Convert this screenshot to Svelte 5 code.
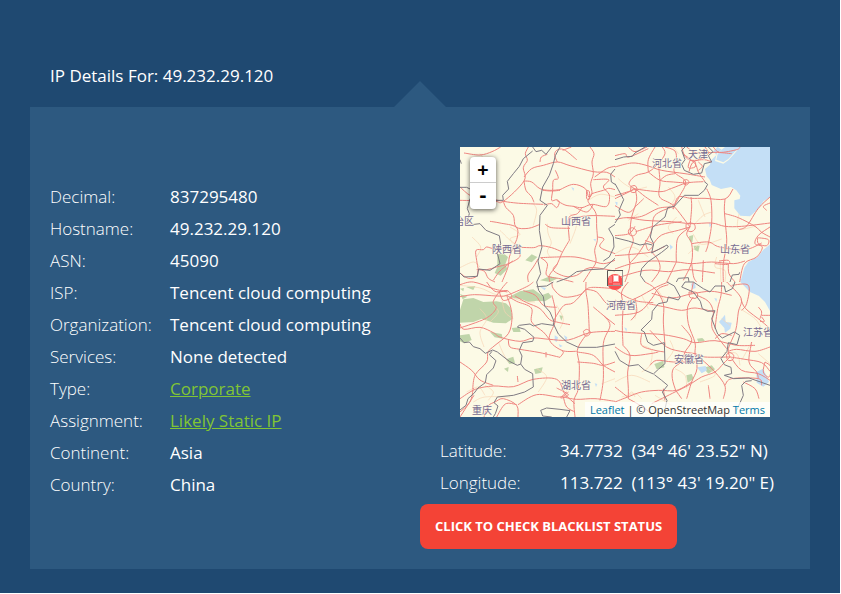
<script>
  const details = [
    { label: 'Decimal:', value: '837295480' },
    { label: 'Hostname:', value: '49.232.29.120' },
    { label: 'ASN:', value: '45090' },
    { label: 'ISP:', value: 'Tencent cloud computing' },
    { label: 'Organization:', value: 'Tencent cloud computing' },
    { label: 'Services:', value: 'None detected' },
    { label: 'Type:', value: 'Corporate', href: '#corporate' },
    { label: 'Assignment:', value: 'Likely Static IP', href: '#static' },
    { label: 'Continent:', value: 'Asia' },
    { label: 'Country:', value: 'China' }
  ];

  const position = [
    { label: 'Latitude:', value: '34.7732\u00a0 (34° 46\' 23.52" N)' },
    { label: 'Longitude:', value: '113.722\u00a0 (113° 43\' 19.20" E)' }
  ];

  const places = [
    { name: '治区', x: -6, y: 78 },
    { name: '山西省', x: 101, y: 78 },
    { name: '陕西省', x: 32, y: 106 },
    { name: '河北省', x: 192, y: 20 },
    { name: '天津', x: 228, y: 11 },
    { name: '山东省', x: 260, y: 106 },
    { name: '河南省', x: 146, y: 162 },
    { name: '湖北省', x: 101, y: 242 },
    { name: '重庆', x: 12, y: 267 },
    { name: '安徽省', x: 214, y: 216 },
    { name: '江苏省', x: 283, y: 189 }
  ];

  // Turns a list of points into a soft curve that runs through all of them.
  function curve(line) {
    const n = line.slice(1).split(' ').map(Number);
    const p = [];
    for (let i = 0; i < n.length; i += 2) p.push([n[i], n[i + 1]]);
    let d = `M${p[0]}`;
    for (let i = 0; i < p.length - 1; i++) {
      const a = p[i - 1] ?? p[i];
      const b = p[i];
      const c = p[i + 1];
      const e = p[i + 2] ?? c;
      d += `C${b[0] + (c[0] - a[0]) / 6} ${b[1] + (c[1] - a[1]) / 6} ${c[0] - (e[0] - b[0]) / 6} ${c[1] - (e[1] - b[1]) / 6} ${c[0]} ${c[1]}`;
    }
    return d;
  }

  // The map is drawn as four tiles, each 465 units wide and 405 high.
  const tiles = [
    {
      shift: 'translate(0 0)',
      minor: [
        'M262 230 264 258 274 288 262 312 270 330', 'M150 240 180 262 150 276 180 300', 'M36 270 62 300 50 330', 'M218 168 230 190 220 235',
        'M0 362 40 345 60 360', 'M385 160 420 142 465 150', 'M330 200 350 230 330 290', 'M60 20 75 40', 'M120 250 160 290'
      ],
      roads: [
        'M12 18 60 24 96 14 122 0', 'M205 0 196 20 202 40 190 62 192 102 130 163 100 162 0 160', 'M0 120 30 145 60 150 130 163 168 168 200 170 250 172',
        'M130 163 138 182 160 205 168 240 205 244 240 232', 'M90 223 120 228 168 240 172 270 160 300 148 330 144 360 126 405', 'M192 102 215 105 240 125 270 130 300 128',
        'M192 102 198 130 214 148 222 166', 'M192 90 215 65 250 55 292 45 330 56 400 74 440 76 465 90', 'M240 45 244 30 262 22', 'M292 45 284 25 290 10 312 8 350 38',
        'M308 10 334 0', 'M390 0 402 20 396 45 400 80 392 110 396 140 384 160 392 175 408 200 410 240 412 280 404 310 408 345 390 374 370 405',
        'M300 128 340 112 376 125 386 150 396 140 430 130 446 124 465 128', 'M248 130 275 132 300 130', 'M286 70 295 94 280 100 278 130 275 160 290 158 298 166 290 182 275 170 252 174',
        'M290 160 315 174 340 178 366 182 396 172 440 178 448 144 430 120 446 98 400 98', 'M366 182 352 200 326 214 328 280', 'M330 214 390 206 465 208', 'M256 232 275 242 330 244',
        'M328 280 305 320 290 355 268 385 270 405', 'M166 300 220 302 240 296 275 302 305 314', 'M242 332 290 330 345 330 390 340 430 350 465 340', 'M242 332 262 350 260 385 300 395 340 405',
        'M292 350 280 370 315 388 350 385 390 362 465 372', 'M55 368 50 340 48 310 70 308 80 300 105 305 160 300', 'M50 368 80 368 110 360 145 350 180 328 166 300',
        'M0 378 25 394 50 388 56 368 74 374 85 394 105 405', 'M205 405 204 384 220 360 235 335', 'M465 58 440 65 404 90', 'M100 400 120 372 158 342', 'M412 270 432 276 420 300 465 320', 'M340 178 380 195 400 172',
        'M380 130 388 134 388 156 380 154 380 130'
      ],
      borders: [
        'M300 0 286 26 280 50 268 85 248 120 240 160 262 175 240 205 238 250 246 300 234 342 242 380 230 405', 'M218 0 228 14 245 10 258 22 275 0',
        'M218 12 190 35 178 58 160 80 142 103 146 126 128 145 130 160 108 160', 'M30 155 22 185 28 200 18 235 60 230 78 250 118 266 122 290 112 318 120 350 90 370 56 366 52 388 12 390 0 378',
        'M0 38 4 50', 'M0 121 20 121 30 126', 'M465 66 452 82 454 105 465 112', 'M465 232 446 245 460 270 462 300 448 330 430 342', 'M465 334 430 366 390 368 350 374 325 392 290 405'
      ],
      woods: ['M112 322 132 320 144 330 136 352 142 366 122 386 104 378 112 360Z', 'M196 340 215 322 232 330 215 346Z', 'M240 400 270 388 294 394 270 405Z'],
      water: ['M334 120 342 124 340 132Z', 'M400 276 408 276 406 284Z']
    },
    {
      shift: 'translate(155 0)',
      minor: [
        'M10 95 30 112 60 126 96 120', 'M290 195 265 205 240 230', 'M372 200 370 245 420 238', 'M234 260 260 292 320 276', 'M0 320 50 300 100 330', 'M160 120 180 150 162 180',
        'M185 210 160 240 175 260', 'M250 160 270 210', 'M260 285 220 320', 'M305 330 300 360 330 370 330 405', 'M315 340 318 405', 'M40 220 70 200', 'M175 0 190 20'
      ],
      roads: [
        'M0 26 30 20 42 30 100 5', 'M40 0 60 14 96 0', 'M0 60 50 48 90 54 140 70 210 80 270 90', 'M60 126 42 110 62 86 100 75 130 50 150 20 142 0', 'M120 0 100 38 100 75',
        'M130 50 135 105 134 150 175 176 225 240', 'M60 126 65 160 50 210 46 254 55 280 42 320 44 360 30 405', 'M60 126 135 134 170 124 215 108 265 104', 'M100 75 135 100 175 105 215 108',
        'M0 146 46 132 60 126 92 150 130 175', 'M0 176 40 196 65 175 86 155', 'M36 212 80 208 130 184 170 180', 'M0 218 36 212 90 220 170 224 228 230 290 228 330 238 380 238 465 228',
        'M150 0 180 12 184 42 178 75 212 105 192 150 178 176', 'M200 0 210 28 230 40 268 38 290 45', 'M204 20 240 50 250 75 270 104', 'M270 0 280 20 255 36 232 48 222 74', 'M215 0 245 18 300 16 350 20',
        'M295 0 314 16 365 8 375 0', 'M225 40 240 45 240 60 220 62 225 40', 'M250 45 262 58 250 70', 'M175 170 175 186 190 150 228 154 270 154 330 156 354 126', 'M228 150 230 180 225 240',
        'M330 156 328 190 332 238 335 290 325 350 325 405', 'M330 200 370 212 420 238 440 256 465 270', 'M275 125 288 160 290 228 280 290 272 315', 'M225 240 190 250 140 264 115 290',
        'M225 240 215 262 230 290 230 345 205 400', 'M225 240 190 270 184 310 184 345', 'M213 232 225 228 238 232 240 246 228 254 215 248 213 232', 'M230 290 280 285 314 300 390 308 440 288',
        'M135 100 155 85 180 80', 'M170 180 120 205 110 250 95 280 70 320 45 348', 'M60 126 0 155', 'M0 266 42 260 60 238', 'M52 242 62 248 64 258 56 266 44 264 40 254 44 245 52 242', 'M62 254 130 234 200 224',
        'M0 326 50 322 110 315 150 298', 'M0 366 50 350 110 342 184 345 230 350 290 345 355 350 390 342', 'M230 350 236 390 245 405', 'M340 352 342 380 360 405', 'M465 150 430 184 396 236 372 248',
        'M465 168 445 178 455 190', 'M465 240 430 265 420 290 442 300 425 330 388 350 374 405', 'M428 272 460 278 455 296 430 290 428 272', 'M90 280 115 292 100 310 92 290', 'M110 405 134 370 130 340 110 315',
        'M155 405 184 345', 'M0 395 90 370 160 374 220 368 300 378', 'M265 340 262 405', 'M300 350 340 352 340 340 312 342', 'M48 118 60 116 66 126 60 136 48 134 48 118', 'M206 100 216 98 222 106 214 114 206 110 206 100'
      ],
      borders: [
        'M0 38 26 30 52 28 60 18 90 0', 'M0 110 10 128 26 158 12 190 16 204 0 228', 'M280 0 294 14 280 26 290 45 268 50 260 78 235 82 208 70 200 52 210 38 200 10 210 0',
        'M268 104 278 112 268 130 250 145 208 145 178 178 158 182 150 210 130 226 112 242 106 270 116 290 110 318 156 294 160 300 140 316 98 345 80 365 76 385 90 405',
        'M0 272 40 282 75 294 96 290 112 294', 'M345 405 352 384 372 382 374 376', 'M184 405 190 394 220 392 222 405'
      ],
      woods: ['M222 268 235 264 232 286 224 282Z', 'M236 296 254 296 250 314 238 308Z'],
      water: [
        'M308 0 295 12 304 24 290 38 284 54 270 66 275 88 284 98 290 114 318 126 348 120 364 130 376 146 374 156 358 160 358 184 376 206 405 208 430 186 446 162 468 150 468 0 375 0 358 20 340 40 325 50 300 42 305 20 320 8Z',
        'M320 8 308 22 304 38 325 46 340 36 358 16 375 0 330 0Z',
        'M468 290 445 308 428 330 400 345 388 362 376 405 468 405Z', 'M0 164 8 166 6 178Z', 'M164 292 174 300 166 308Z', 'M282 225 290 235 284 240Z'
      ]
    },
    {
      shift: 'translate(0 135)',
      minor: [
        'M0 10 60 18 100 35 140 45', 'M150 45 190 58 225 60', 'M60 80 80 110 60 150 72 195', 'M115 180 130 215 145 240', 'M100 70 115 90 90 120', 'M230 260 260 285 235 330', 'M75 310 100 330 85 355',
        'M20 330 55 315 75 340', 'M290 70 310 110 300 140', 'M125 45 135 90 160 110', 'M425 305 465 290', 'M40 360 75 345 150 345'
      ],
      roads: [
        'M0 44 44 38 110 42 140 40 200 14 220 0', 'M142 0 125 20 100 58 108 80 76 110 0 138', 'M0 126 12 142 60 136 100 152 122 166 180 178 220 168 268 172 325 174 390 152 465 148',
        'M140 40 152 75 156 110 145 155 105 190 84 210 80 240 46 278 38 320', 'M118 30 142 26 155 45 130 55 118 30', 'M140 40 170 58 214 78 215 120 250 150 268 172', 'M165 42 200 62 240 80 268 112 290 120 330 128',
        'M190 26 226 40 250 70 290 76', 'M276 40 285 80 285 120 268 172 305 205 350 208', 'M276 0 280 20 310 45 360 38 378 22 400 16 465 20', 'M378 0 378 30 384 70 388 150', 'M378 22 340 62 312 70 290 100 280 120',
        'M388 150 370 170 352 205 358 250 355 320 342 355 345 405', 'M378 22 410 30 440 65 465 70', 'M370 148 380 142 390 148 388 158 376 162 370 148', 'M145 172 150 195 180 202 240 212 300 226',
        'M300 226 310 212 305 205', 'M352 210 400 220 430 250 465 270', 'M352 240 400 244 430 250 465 240', 'M430 100 450 130 430 185 430 290 420 355', 'M0 240 35 265 60 294 100 310',
        'M0 350 46 322 100 312 160 314 220 292 290 292 314 335 345 365', 'M40 318 30 360 0 390', 'M172 282 174 300', 'M258 210 258 226', 'M72 405 84 372 105 360 130 350 170 370 174 405', 'M174 368 230 338 300 345 325 330',
        'M290 318 325 338 302 348 320 330', 'M310 345 350 352 405 350 465 358', 'M310 345 320 375 345 390', 'M0 405 42 340', 'M110 405 136 366 170 368', 'M465 128 430 100 400 75', 'M0 8 40 0 100 20 142 30', 'M80 0 105 28 142 26'
      ],
      borders: [
        'M230 0 236 25 250 44 254 72 270 90 282 118 280 130 245 125 220 132 210 126 178 130 172 135 194 142 222 166 218 178 188 182 178 205 186 222 182 246 172 250 148 238 112 210 98 204 76 214 60 200 40 194 28 180 12 182 0 168',
        'M96 208 88 218 108 236 100 258 80 278 76 302 54 318 42 334 24 350 18 370 0 384', 'M182 246 194 262 218 275 220 315 194 330 160 340 112 345 102 362 114 372 106 395 100 405', 'M280 125 295 156 320 180 355 196 410 196 465 186',
        'M242 385 260 378 300 382 330 386 320 405', 'M242 385 248 402 275 405', 'M230 14 260 12 280 0'
      ],
      woods: [
        'M10 52 40 48 70 60 110 58 138 64 152 78 158 110 138 124 100 122 65 110 40 120 0 122 0 84Z', 'M145 46 180 28 220 22 245 40 265 32 276 45 255 58 230 56 205 60 185 52Z', 'M18 15 46 12 40 24Z',
        'M90 150 125 156 128 170 104 166Z', 'M0 160 28 156 35 174 12 184 0 178Z', 'M155 138 178 136 182 150 160 150Z', 'M138 232 160 224 165 244 148 246Z', 'M222 262 248 256 244 272 226 276Z', 'M132 260 146 255 144 270Z',
        'M0 36 22 44 8 52Z', 'M298 100 310 102 304 116Z', 'M0 20 12 18 10 28Z'
      ],
      water: ['M284 160 294 166 290 180 284 176Z', 'M296 186 308 192 300 196Z', 'M312 160 322 166 318 180Z', 'M240 14 258 18 254 25Z', 'M404 304 412 306 408 315Z']
    },
    {
      shift: 'translate(155 135)',
      minor: [
        'M20 60 60 80 60 110', 'M0 300 50 280 105 300', 'M80 190 110 205 105 250 80 270', 'M165 175 175 205 155 235', 'M180 260 210 280 215 320', 'M280 260 300 280 255 300',
        'M375 80 420 110 440 140', 'M320 110 345 130', 'M20 345 60 335 80 350', 'M30 350 50 330 60 345', 'M328 212 365 215 375 250', 'M430 215 465 245', 'M410 180 380 235', 'M120 340 170 370', 'M130 25 150 60', 'M80 40 100 80'
      ],
      roads: [
        'M0 22 35 45 70 58 115 62', 'M40 0 20 30 24 70 22 130 24 190', 'M0 70 60 50 125 15 160 0', 'M90 0 120 20 145 65 145 120 150 190', 'M0 145 25 150 80 154 145 158 205 170 240 182 300 176 365 190 420 190',
        'M160 8 130 20 110 50 72 90 0 100', 'M110 34 170 48 228 36 290 28 350 40', 'M228 36 235 0', 'M222 30 246 32 244 48 225 46 222 30', 'M235 45 218 75 220 125 240 182 240 215 246 260 230 300 215 350',
        'M246 40 280 58 295 90 292 140 335 200', 'M100 65 150 75 200 85 240 78 300 90', 'M320 0 318 40 308 80 300 140', 'M335 0 378 48 370 90 362 145 340 200 345 225', 'M350 10 400 10 395 65 380 85',
        'M378 52 392 80 440 118 465 140', 'M340 208 365 202 420 208 465 195', 'M334 218 345 212 356 220 352 234 338 234 334 218', 'M345 225 390 232 440 242 465 268', 'M345 225 325 245 300 270 260 285 220 310 180 330 110 365',
        'M350 230 380 265 430 275 465 295', 'M435 110 440 90 430 75', 'M435 118 448 118 440 105', 'M200 130 230 172 210 210 200 238 175 260 172 290 182 325', 'M105 145 155 195 208 210 240 215 270 225 345 225',
        'M80 154 80 190 120 205 150 210', 'M24 190 45 220 38 270 40 320 40 350', 'M0 195 45 220 105 215 130 210', 'M105 250 125 235 175 240 240 240', 'M240 215 260 232 300 270 330 312 325 350',
        'M0 360 38 345 80 330 130 325 185 325 230 300', 'M38 345 0 315', 'M40 350 75 370 110 395', 'M182 325 200 350', 'M145 320 150 355', 'M330 310 350 290 430 290 440 310', 'M410 180 402 240 425 270 430 290',
        'M440 100 465 100', 'M300 170 320 155 350 160', 'M385 300 420 320 432 350', 'M0 54 24 70', 'M60 48 65 90 48 115', 'M450 240 468 255 462 285 445 270 450 240', 'M280 310 285 350'
      ],
      borders: [
        'M156 0 178 12 196 45 190 54 160 45 156 60 130 65 112 88 110 112 78 144 88 150 98 180 115 190 148 182 150 245 130 262 115 276 88 264 70 248 42 252 14 235 0 208',
        'M360 0 352 20 332 30 328 12 300 12 285 30 265 20 235 0 210 0 200 15 235 30 256 58 262 80 278 88 300 86 290 110 308 156 322 168 358 150 374 160 366 188 340 182 336 208 318 230 328 248 348 256 350 275 328 280 356 290 402 288 465 310',
        'M365 385 385 340 380 310 392 298 410 296', 'M118 278 140 295 158 310 142 330 156 355 150 380'
      ],
      woods: ['M118 246 145 236 148 256 125 262Z', 'M214 280 230 276 236 290 218 302Z', 'M246 170 262 168 270 176 250 180Z', 'M265 258 290 250 300 262 280 275Z'],
      water: [
        'M376 0 405 30 432 42 450 60 468 92 468 0Z', 'M312 120 330 98 332 120 350 122 346 140 330 152 328 138Z', 'M246 256 272 252 276 265 260 274Z', 'M424 270 444 260 455 282 462 300 445 314 425 302Z',
        'M228 5 240 2 242 18 232 22Z', 'M28 136 36 140 34 150Z', 'M298 48 306 50 304 60Z'
      ]
    }
  ];
</script>

<main class="page">
  <h1>IP Details For: 49.232.29.120</h1>

  <section class="panel">
    <dl class="facts">
      {#each details as row}
        <div class="row">
          <dt>{row.label}</dt>
          <dd>{#if row.href}<a href={row.href}>{row.value}</a>{:else}{row.value}{/if}</dd>
        </div>
      {/each}
    </dl>

    <div class="side">
      <div class="map">
        <svg viewBox="0 0 310 270" preserveAspectRatio="xMidYMid slice" role="img" aria-label="Map">
          <rect width="310" height="270" fill="#fcfae6" />
          {#each tiles as tile}
            <g transform="{tile.shift} scale(0.33333)" fill="none" stroke-linejoin="round">
              {#each tile.woods as d}<path {d} fill="#c0d5aa" />{/each}
              {#each tile.water as d}<path {d} fill="#c4dff6" />{/each}
              <path d={tile.minor.map(curve).join('')} stroke="#f8d3b4" stroke-width="2" />
              <path d={tile.roads.map(curve).join('')} stroke="#ee8580" stroke-width="3" />
              <path d={tile.borders.join('')} stroke="#7e7a83" stroke-width="3" />
            </g>
          {/each}
          <g class="places">
            {#each places as place}<text x={place.x} y={place.y}>{place.name}</text>{/each}
          </g>
          <circle cx="155" cy="135" r="8" fill="#fb5050" />
          <path d="M149 129h3v7h-3zM153 136h7v2h-7z" fill="#f77" />
          <rect x="153" y="128" width="6" height="7" fill="#f9a7a7" />
          <rect x="154" y="129" width="4" height="5" fill="#fff" />
          <path d="M162.500 123v16M147 138.500h16" stroke="#9c9794" />
          <path d="M147.500 139v-15.500H163" fill="none" stroke="#5a5553" />
        </svg>
        <div class="zoom">
          <button type="button" aria-label="Zoom in">+</button>
          <button type="button" aria-label="Zoom out">-</button>
        </div>
        <div class="credit"><a href="#leaflet">Leaflet</a> | © OpenStreetMap <a href="#terms">Terms</a></div>
      </div>

      <dl class="position">
        {#each position as row}
          <div class="row">
            <dt>{row.label}</dt>
            <dd>{row.value}</dd>
          </div>
        {/each}
      </dl>

      <button class="check" type="button">CLICK TO CHECK BLACKLIST STATUS</button>
    </div>
  </section>
</main>

<style>
  :global(body) {
    margin: 0;
    background: #fff;
  }
  .page {
    box-sizing: border-box;
    min-height: calc(100vh - 1px);
    margin-right: 1px;
    padding: 60px 30px 24px;
    background: #1f4971;
    color: #fff;
    font: 17px/32px "Open Sans", "Noto Sans", sans-serif;
  }
  h1 {
    margin: 0 20px 15px;
    font-size: 17px;
    font-weight: 400;
  }
  .panel {
    position: relative;
    display: grid;
    grid-template-columns: 1fr 1fr;
    padding: 40px 0 20px;
    background: #2d5980;
  }
  .panel::before {
    content: "";
    position: absolute;
    bottom: 100%;
    left: 50%;
    margin-left: -26px;
    border: solid transparent;
    border-width: 0 26px 26px;
    border-bottom-color: #2d5980;
  }
  dl,
  dd {
    margin: 0;
  }
  .facts {
    padding: 34px 0 0 20px;
  }
  .row {
    display: grid;
    grid-template-columns: 120px 1fr;
    white-space: nowrap;
  }
  dt {
    font-weight: 300;
  }
  dd a {
    color: #81c534;
  }
  .map {
    position: relative;
    height: 270px;
    margin: 0 40px 18px;
    overflow: hidden;
  }
  .map svg {
    display: block;
    width: 100%;
    height: 100%;
  }
  .places {
    fill: #776a91;
    stroke: #fcfae6;
    stroke-width: 1px;
    paint-order: stroke;
    font: 10px "Noto Sans CJK SC", sans-serif;
  }
  .zoom {
    position: absolute;
    top: 10px;
    left: 10px;
    display: flex;
    flex-direction: column;
    width: 26px;
    border-radius: 4px;
    background: #fff;
    box-shadow: 0 1px 5px rgba(0, 0, 0, 0.65);
  }
  .zoom button {
    height: 26px;
    padding: 0;
    border: 0;
    background: none;
    color: #000;
    font: bold 18px/26px "DejaVu Sans Mono", monospace;
  }
  .zoom button:first-child {
    border-bottom: 1px solid #ccc;
  }
  .credit {
    position: absolute;
    right: 0;
    bottom: 0;
    padding: 0 5px;
    background: rgba(255, 255, 255, 0.7);
    color: #333;
    font-size: 11px;
    line-height: 15px;
    white-space: nowrap;
  }
  .credit a {
    color: #0078a8;
    text-decoration: none;
  }
  .position {
    padding-left: 20px;
  }
  .check {
    display: block;
    margin-top: 5px;
    padding: 12px 15px 13px;
    border: 0;
    border-radius: 8px;
    background: #f44336;
    color: #fff;
    font: bold 13px/20px "Open Sans", sans-serif;
    white-space: nowrap;
  }
</style>
